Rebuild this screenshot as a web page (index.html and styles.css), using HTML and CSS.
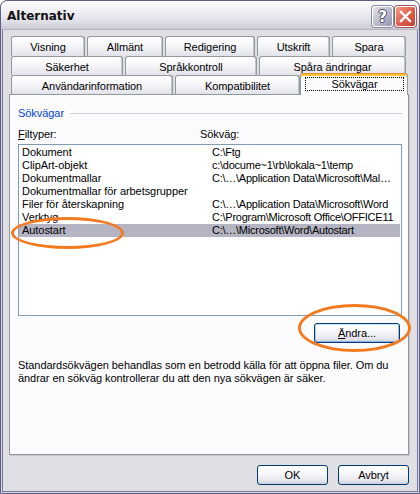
FILE: index.html
```html
<!DOCTYPE html>
<html lang="sv">
<head>
    <meta charset="UTF-8">
    <title>Alternativ</title>
    <link rel="stylesheet" href="styles.css">
</head>
<body>

    <div class="window">
        <!-- Title bar -->
        <div class="titlebar">
            <span class="title">Alternativ</span>
            <div class="caption-buttons">
                <div class="cap-btn help">?</div>
                <div class="cap-btn close">
                    <svg width="13" height="13" viewBox="0 0 13 13">
                        <path d="M2 2 L11 11 M11 2 L2 11" stroke="#fff" stroke-width="2.4" stroke-linecap="square"/>
                    </svg>
                </div>
            </div>
        </div>

        <div class="dialog-body">
            <!-- Tabs, three rows -->
            <div class="tabs">
                <div class="tab-row row-1">
                    <div class="tab">Visning</div>
                    <div class="tab">Allmänt</div>
                    <div class="tab">Redigering</div>
                    <div class="tab">Utskrift</div>
                    <div class="tab">Spara</div>
                </div>
                <div class="tab-row row-2">
                    <div class="tab">Säkerhet</div>
                    <div class="tab">Språkkontroll</div>
                    <div class="tab">Spåra ändringar</div>
                </div>
                <div class="tab-row row-3">
                    <div class="tab">Användarinformation</div>
                    <div class="tab">Kompatibilitet</div>
                    <div class="tab active"><span class="focus">Sökvägar</span></div>
                </div>
            </div>

            <div class="tab-panel">
                <div class="group-head"><span>Sökvägar</span></div>

                <div class="list-head">
                    <span class="col-label"><u>F</u>iltyper:</span>
                    <span>Sökväg:</span>
                </div>

                <div class="listbox">
                    <div class="list-row"><span class="col-type">Dokument</span><span class="col-path">C:\Ftg</span></div>
                    <div class="list-row"><span class="col-type">ClipArt-objekt</span><span class="col-path">c:\docume~1\rb\lokala~1\temp</span></div>
                    <div class="list-row"><span class="col-type">Dokumentmallar</span><span class="col-path">C:\…\Application Data\Microsoft\Mal…</span></div>
                    <div class="list-row"><span class="col-type">Dokumentmallar för arbetsgrupper</span><span class="col-path"></span></div>
                    <div class="list-row"><span class="col-type">Filer för återskapning</span><span class="col-path">C:\…\Application Data\Microsoft\Word</span></div>
                    <div class="list-row"><span class="col-type">Verktyg</span><span class="col-path">C:\Program\Microsoft Office\OFFICE11</span></div>
                    <div class="list-row selected"><span class="col-type">Autostart</span><span class="col-path">C:\…\Microsoft\Word\Autostart</span></div>
                </div>

                <div class="button-row">
                    <div class="btn default"><u>Ä</u>ndra...</div>
                </div>

                <p class="note">
                    Standardsökvägen behandlas som en betrodd källa för att öppna filer. Om du<br>
                    ändrar en sökväg kontrollerar du att den nya sökvägen är säker.
                </p>
            </div>

            <div class="dialog-buttons">
                <div class="btn">OK</div>
                <div class="btn">Avbryt</div>
            </div>
        </div>

        <!-- Orange callout rings drawn over the dialog -->
        <div class="callout callout-autostart"></div>
        <div class="callout callout-change"></div>
    </div>

</body>
</html>
```

FILE: styles.css
```css
:root {
    --face: #e0dfe3;
    --frame-dark: #5f5f85;
    --tab-border: #919b9c;
    --panel-bg: #fcfcfe;
    --btn-border: #003c74;
    --ring: #f47a20;
}
body {
    margin: 0;
    background: #ffffff;
    font-family: 'Liberation Sans', Arial, sans-serif;
    font-size: 11px;
    letter-spacing: -0.06px;
    color: #000;
}

/* Window frame */
.window {
    position: relative;
    width: 420px;
    height: 494px;
    box-sizing: border-box;
    background: var(--face);
    border: 1px solid var(--frame-dark);
    border-radius: 7px 7px 0 0;
    box-shadow: inset 0 0 0 1px #d6d6e0, inset 0 0 0 2px #7a7a9e;
    overflow: hidden;
}
.titlebar {
    height: 28px;
    display: flex;
    align-items: center;
    justify-content: space-between;
    padding: 0 3px 0 6px;
    border-radius: 6px 6px 0 0;
    background: linear-gradient(#fdfdfe 0%, #efeff4 35%, #dedee6 75%, #cacad6 100%);
    border-bottom: 1px solid #b4b4c4;
}
.title {
    font-family: 'DejaVu Sans', sans-serif;
    font-weight: 700;
    font-size: 12px;
    letter-spacing: 0;
    color: #111;
    padding-top: 2px;
}
.caption-buttons { display: flex; gap: 2px; padding-top: 3px; }
.cap-btn {
    width: 21px;
    height: 21px;
    box-sizing: border-box;
    border: 1px solid #fff;
    border-radius: 3px;
    display: flex;
    align-items: center;
    justify-content: center;
    box-shadow: 0 0 0 1px #8a8aa6;
}
.cap-btn.help {
    background: linear-gradient(135deg, #e4e4ee 0%, #b8b8cc 55%, #9494b0 100%);
    color: #fff;
    font-family: 'DejaVu Sans', sans-serif;
    font-weight: 700;
    font-size: 15px;
    text-shadow: 1px 0 #4a4a60, -1px 0 #4a4a60, 0 1px #4a4a60, 0 -1px #4a4a60;
}
.cap-btn.close {
    background: linear-gradient(135deg, #f29a88 0%, #e1604c 50%, #c4412e 100%);
    box-shadow: 0 0 0 1px #a85a58;
}

/* Dialog body */
.dialog-body {
    padding: 6px 10px 0 8px;
}
.tabs {
    margin-left: 2px;
    width: 395px;
}
.tab-row {
    display: grid;
    gap: 2px;
    height: 19px;
}
.row-1 { height: 20px; grid-template-columns: 74px 76px 90px 73px 74px; }
.row-2 { grid-template-columns: 112px 132px 147px; }
.row-3 { grid-template-columns: 162px 125px 104px; }
.tab {
    display: flex;
    align-items: center;
    justify-content: center;
    padding-top: 1px;
    border: 1px solid var(--tab-border);
    border-bottom: none;
    border-radius: 3px 3px 0 0;
    background: linear-gradient(#ffffff 0%, #f6f6f9 45%, #e2e2ea 100%);
    box-shadow: inset -1px 0 #c4c4d0;
    white-space: nowrap;
}
.tab.active {
    position: relative;
    z-index: 1;
    margin: -2px -2px -1px -2px;
    display: block;
    padding: 3px 3px 0 4px;
    background: var(--panel-bg);
    border-top: 1px solid #e68b2c;
    box-shadow: inset 0 2px #ffc83c;
}
.tab.active .focus {
    display: block;
    height: 14px;
    box-sizing: border-box;
    border: 1px dotted #000;
    text-align: center;
    line-height: 12px;
}

/* Tab page */
.tab-panel {
    height: 361px;
    box-sizing: border-box;
    background: var(--panel-bg);
    border: 1px solid var(--tab-border);
    box-shadow: 1px 1px 0 #c8c8d2;
    padding: 0 6px 0 8px;
}
.group-head {
    margin-top: 12px;
    display: flex;
    align-items: center;
    gap: 6px;
    line-height: 13px;
    color: #0046d5;
}
.group-head::after {
    content: '';
    flex: 1;
    height: 1px;
    background: #d0d0d4;
}
.list-head {
    margin-top: 8px;
    line-height: 13px;
    display: flex;
}
.col-label { width: 182px; }
.listbox {
    margin-top: 3px;
    height: 172px;
    box-sizing: border-box;
    border: 1px solid #7f9db9;
    background: #fff;
    padding: 1px 1px 0 0;
}
.list-row {
    display: flex;
    height: 13px;
    line-height: 13px;
    padding-left: 3px;
    white-space: nowrap;
}
.list-row.selected { background: #b4b4c2; }
.col-type { width: 190px; flex: none; }
.col-path { flex: 1; letter-spacing: -0.25px; }

.button-row {
    margin-top: 7px;
    display: flex;
    justify-content: flex-end;
    padding-right: 2px;
}
.btn {
    width: 71px;
    height: 20px;
    box-sizing: border-box;
    border: 1px solid var(--btn-border);
    border-radius: 3px;
    background: linear-gradient(#ffffff 0%, #f7f7fa 45%, #e6e6ee 80%, #cfcfdc 100%);
    display: flex;
    align-items: center;
    justify-content: center;
}
.btn.default {
    width: 86px;
    box-shadow: inset 0 1px #cfe0fb, inset 0 -1px #97b2e6, inset 1px 0 #b8cbf2, inset -1px 0 #9db6e8;
}
.note {
    margin: 16px 0 0 0;
    line-height: 13px;
    white-space: nowrap;
}
.dialog-buttons {
    margin-top: 10px;
    display: flex;
    justify-content: flex-end;
    gap: 10px;
}

/* Annotation rings */
.callout {
    position: absolute;
    border: 3px solid var(--ring);
    border-radius: 50%;
    box-sizing: border-box;
}
.callout-autostart { left: 10px; top: 216px; width: 113px; height: 32px; }
.callout-change { left: 297px; top: 303px; width: 113px; height: 48px; }
```
